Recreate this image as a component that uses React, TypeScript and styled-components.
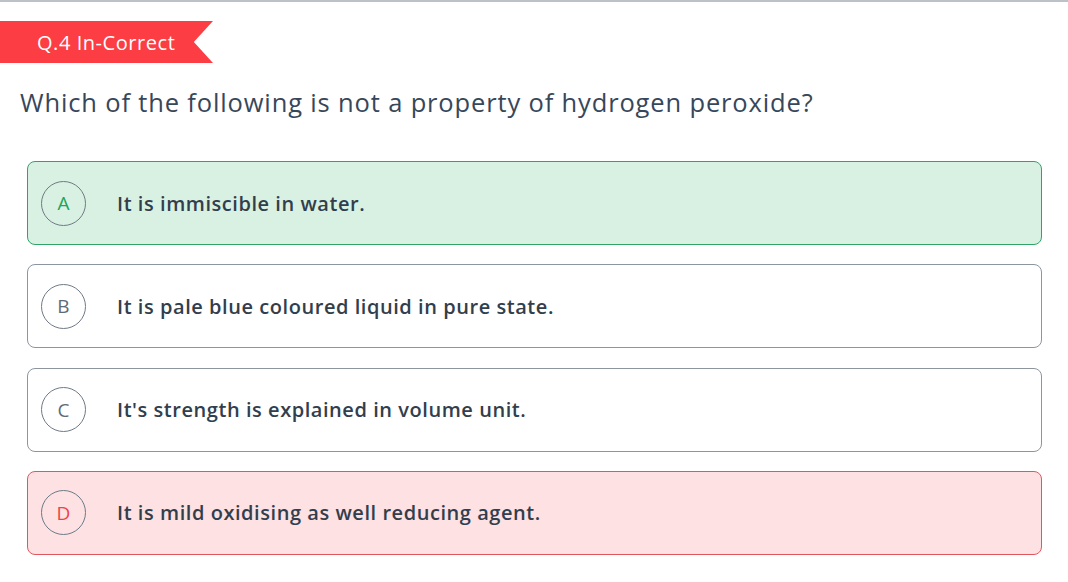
import React from "react";
import styled, { createGlobalStyle } from "styled-components";

const Global = createGlobalStyle`
  html, body { margin: 0; padding: 0; background: #ffffff; }
  body { font-family: "Open Sans", "Noto Sans", sans-serif; }
  * { box-sizing: border-box; }
`;

const Page = styled.div`
  width: 1068px;
  height: 582px;
  border-top: 2px solid #bcc2c8;
  overflow: hidden;
`;

const Badge = styled.div`
  margin-top: 19px;
  width: 213px;
  height: 42px;
  background: #fc3d44;
  clip-path: polygon(0 0, 100% 0, 91% 50%, 100% 100%, 0 100%);
  color: #ffffff;
  font-size: 20px;
  display: flex;
  align-items: center;
  padding-left: 37px;
  letter-spacing: 0.55px;
`;

const Question = styled.h1`
  margin: 24px 0 0 20px;
  font-size: 25.5px;
  font-weight: 500;
  color: #37475a;
  line-height: 30px;
  letter-spacing: 0.85px;
  white-space: nowrap;
`;

const Options = styled.div`
  margin: 44px 26px 0 27px;
  display: flex;
  flex-direction: column;
  gap: 19.3px;
`;

type Tone = "correct" | "wrong" | "plain";

const bg: Record<Tone, string> = {
  correct: "#d9f1e3",
  wrong: "#fde1e3",
  plain: "#ffffff",
};
const border: Record<Tone, string> = {
  correct: "#2ea566",
  wrong: "#e0575f",
  plain: "#8d969f",
};
const letterColor: Record<Tone, string> = {
  correct: "#23a45a",
  wrong: "#f0424a",
  plain: "#5f6a76",
};

const Option = styled.div<{ $tone: Tone }>`
  height: 84px;
  border: 1px solid ${(p) => border[p.$tone]};
  background: ${(p) => bg[p.$tone]};
  border-radius: 8px;
  display: flex;
  align-items: center;
  padding-left: 13px;
`;

const Circle = styled.div<{ $tone: Tone }>`
  width: 45px;
  height: 45px;
  border-radius: 50%;
  border: 1px solid #6f7a86;
  display: flex;
  align-items: center;
  justify-content: center;
  color: ${(p) => letterColor[p.$tone]};
  font-size: 19px;
  font-weight: 400;
  flex-shrink: 0;
`;

const Text = styled.div`
  margin-left: 31px;
  font-size: 20px;
  font-weight: 600;
  color: #323e4c;
  letter-spacing: 0.55px;
  white-space: nowrap;
`;

const data: { l: string; t: string; tone: Tone }[] = [
  { l: "A", t: "It is immiscible in water.", tone: "correct" },
  { l: "B", t: "It is pale blue coloured liquid in pure state.", tone: "plain" },
  { l: "C", t: "It's strength is explained in volume unit.", tone: "plain" },
  { l: "D", t: "It is mild oxidising as well reducing agent.", tone: "wrong" },
];

export default function App() {
  return (
    <>
      <Global />
      <Page>
        <Badge>Q.4 In-Correct</Badge>
        <Question>Which of the following is not a property of hydrogen peroxide?</Question>
        <Options>
          {data.map((d) => (
            <Option key={d.l} $tone={d.tone}>
              <Circle $tone={d.tone}>{d.l}</Circle>
              <Text>{d.t}</Text>
            </Option>
          ))}
        </Options>
      </Page>
    </>
  );
}
